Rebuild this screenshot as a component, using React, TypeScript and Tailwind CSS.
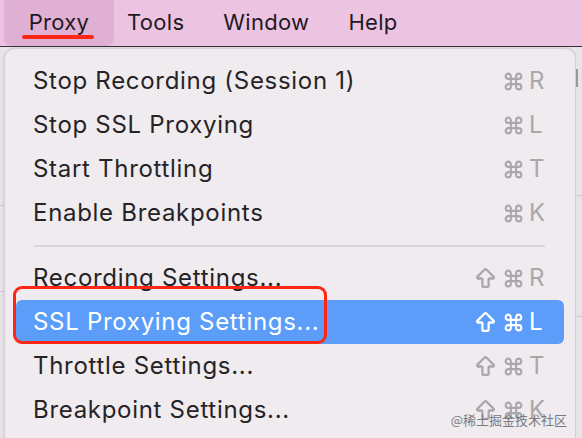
import React from "react";
import { Command, ArrowBigUp } from "lucide-react";

type Item =
  | { kind: "item"; label: string; shift?: boolean; keyName: string; active?: boolean }
  | { kind: "sep" };

const items: Item[] = [
  { kind: "item", label: "Stop Recording (Session 1)", keyName: "R" },
  { kind: "item", label: "Stop SSL Proxying", keyName: "L" },
  { kind: "item", label: "Start Throttling", keyName: "T" },
  { kind: "item", label: "Enable Breakpoints", keyName: "K" },
  { kind: "sep" },
  { kind: "item", label: "Recording Settings...", shift: true, keyName: "R" },
  { kind: "item", label: "SSL Proxying Settings...", shift: true, keyName: "L", active: true },
  { kind: "item", label: "Throttle Settings...", shift: true, keyName: "T" },
  { kind: "item", label: "Breakpoint Settings...", shift: true, keyName: "K" },
];

const menus = ["Proxy", "Tools", "Window", "Help"];

function Shortcut({ shift, keyName, active }: { shift?: boolean; keyName: string; active?: boolean }) {
  return (
    <div className={`flex items-center ${active ? "text-white" : "text-[#a9a7aa]"}`}>
      {shift && <ArrowBigUp size={25} strokeWidth={2.2} className="mr-[5px]" />}
      <Command size={21} strokeWidth={2.3} />
      <span className="ml-[5px] w-[15px] text-[24px]">{keyName}</span>
    </div>
  );
}

export default function App() {
  return (
    <div
      className="relative h-[438px] w-[582px] overflow-hidden bg-[#e9e6e9]"
      style={{ fontFamily: "Inter, 'Noto Sans', sans-serif" }}
    >
      {/* menu bar */}
      <div className="flex h-[47px] items-stretch border-b border-[#3a3438] bg-[#ecc4e2] px-[4px]">
        {menus.map((m, i) => (
          <div
            key={m}
            className={`flex items-center pb-[2px] text-[22px] tracking-[0.3px] text-[#1f1a22] ${
              i === 0 ? "w-[110px] justify-center rounded-b-[7px] bg-[#dfb0d4]" : ""
            } ${i === 1 ? "ml-[13px]" : ""} ${i === 2 ? "ml-[39px]" : ""} ${i === 3 ? "ml-[39px]" : ""}`}
          >
            {m}
          </div>
        ))}
      </div>

      {/* red underline under Proxy */}
      <div className="absolute left-[22px] top-[35px] h-[4px] w-[72px] rounded-full bg-[#ff2613]" />

      <div className="flex">
        {/* background window edge */}
        <div className="flex w-[4px] flex-col bg-[#e7e4e7]">
          <div className="h-[158px]" />
          <div className="h-px bg-[#cfcacf]" />
          <div className="h-[85px]" />
          <div className="h-px bg-[#cfcacf]" />
        </div>

        {/* dropdown menu */}
        <div className="mt-[1px] flex h-[400px] flex-1 flex-col rounded-t-[11px] border border-[#d6d1d6] bg-[#efebef] pt-[10px] shadow-[0_0_3px_rgba(0,0,0,0.15)]">
          {items.map((it, idx) =>
            it.kind === "sep" ? (
              <div key={idx} className="flex h-[21px] items-center pl-[29px] pr-[30px]">
                <div className="h-[2px] w-full bg-[#d9d5d9]" />
              </div>
            ) : (
              <div key={idx} className="px-[11px]">
                <div
                  className={`flex h-[44px] items-center justify-between rounded-[6px] pl-[17px] pr-[20px] text-[24px] tracking-[0.7px] ${
                    it.active ? "bg-[#5b9df9] text-white" : "text-[#262326]"
                  }`}
                >
                  <span>{it.label}</span>
                  <Shortcut shift={it.shift} keyName={it.keyName} active={it.active} />
                </div>
              </div>
            )
          )}
        </div>

        {/* right background window edge */}
        <div className="flex w-[6px] flex-col bg-[#e7e4e7]">
          <div className="h-[22px]" />
          <div className="h-[18px] w-[2px] bg-[#9c979c]" />
          <div className="h-[108px]" />
          <div className="h-px bg-[#cfcacf]" />
          <div className="h-[120px]" />
          <div className="h-px bg-[#cfcacf]" />
        </div>
      </div>

      {/* red annotation box */}
      <div className="absolute left-[13px] top-[286px] h-[58px] w-[314px] rounded-[9px] border-[3px] border-[#ff2613]" />

      {/* watermark */}
      <div
        className="absolute bottom-[9px] right-[15px] text-[13px] text-[#7d7a7e]"
        style={{ fontFamily: "'Noto Sans CJK SC', sans-serif" }}
      >
        @稀土掘金技术社区
      </div>
    </div>
  );
}
